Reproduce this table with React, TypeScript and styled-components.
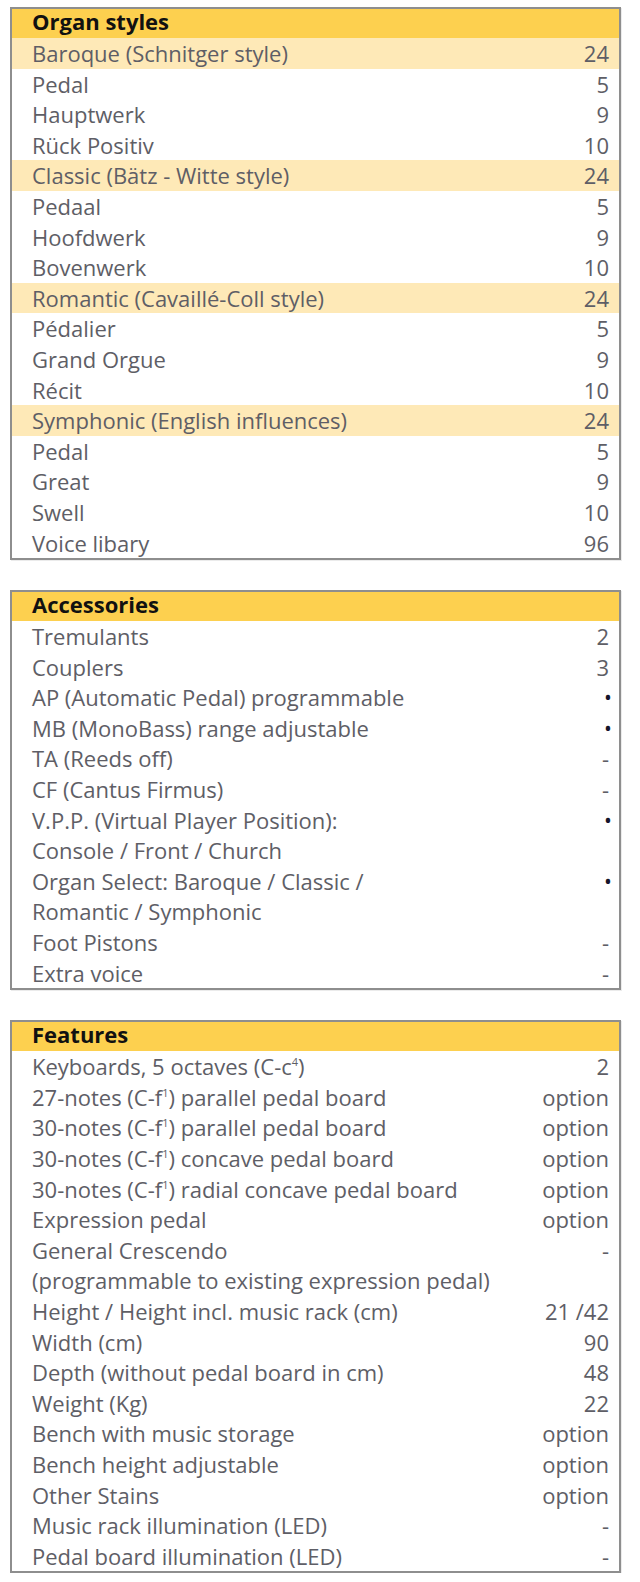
import React from "react";
import styled, { createGlobalStyle } from "styled-components";

const GlobalStyle = createGlobalStyle`
  html, body {
    margin: 0;
    padding: 0;
    background: #ffffff;
  }
  body {
    font-family: "Open Sans", "Noto Sans", sans-serif;
  }
`;

const Page = styled.main`
  width: 640px;
  box-sizing: border-box;
  padding: 7px 19px 0 10px;
  display: flex;
  flex-direction: column;
  gap: 30px;
`;

const Table = styled.section`
  border: 2px solid #8e8e8e;
  box-shadow: 1px 1px 0 rgba(0, 0, 0, 0.08);
  background: #ffffff;
`;

const Header = styled.h2`
  margin: 0;
  background: #fdd04f;
  color: #111111;
  font-size: 22px;
  font-weight: 700;
  line-height: 25px;
  padding: 0 10px 4px 20px;
`;

const Row = styled.div<{ $highlight?: boolean }>`
  display: grid;
  grid-template-columns: 1fr auto;
  align-items: start;
  padding: 0 10px 0 20px;
  background: ${(p) => (p.$highlight ? "#fee9b7" : "transparent")};
  color: #5e5e66;
  font-size: 22px;
  line-height: 30.6px;
`;

const Label = styled.div`
  white-space: pre-line;
`;

const Value = styled.div<{ $bullet?: boolean }>`
  text-align: right;
  ${(p) =>
    p.$bullet
      ? "font-size: 21px; color: #15152a; position: relative; top: 0; right: -3px;"
      : ""}
`;

const Sup = styled.sup`
  font-size: 11px;
  line-height: 0;
  vertical-align: 9px;
`;

type Item = {
  label: React.ReactNode;
  value: string;
  highlight?: boolean;
};

const dot = "•";

const organStyles: Item[] = [
  { label: "Baroque (Schnitger style)", value: "24", highlight: true },
  { label: "Pedal", value: "5" },
  { label: "Hauptwerk", value: "9" },
  { label: "Rück Positiv", value: "10" },
  { label: "Classic (Bätz - Witte style)", value: "24", highlight: true },
  { label: "Pedaal", value: "5" },
  { label: "Hoofdwerk", value: "9" },
  { label: "Bovenwerk", value: "10" },
  { label: "Romantic (Cavaillé-Coll style)", value: "24", highlight: true },
  { label: "Pédalier", value: "5" },
  { label: "Grand Orgue", value: "9" },
  { label: "Récit", value: "10" },
  { label: "Symphonic (English influences)", value: "24", highlight: true },
  { label: "Pedal", value: "5" },
  { label: "Great", value: "9" },
  { label: "Swell", value: "10" },
  { label: "Voice libary", value: "96" },
];

const accessories: Item[] = [
  { label: "Tremulants", value: "2" },
  { label: "Couplers", value: "3" },
  { label: "AP (Automatic Pedal) programmable", value: dot },
  { label: "MB (MonoBass) range adjustable", value: dot },
  { label: "TA (Reeds off)", value: "-" },
  { label: "CF (Cantus Firmus)", value: "-" },
  { label: "V.P.P. (Virtual Player Position):\nConsole / Front / Church", value: dot },
  { label: "Organ Select: Baroque / Classic /\nRomantic / Symphonic", value: dot },
  { label: "Foot Pistons", value: "-" },
  { label: "Extra voice", value: "-" },
];

const features: Item[] = [
  { label: <>Keyboards, 5 octaves (C-c<Sup>4</Sup>)</>, value: "2" },
  { label: <>27-notes (C-f<Sup>1</Sup>) parallel pedal board</>, value: "option" },
  { label: <>30-notes (C-f<Sup>1</Sup>) parallel pedal board</>, value: "option" },
  { label: <>30-notes (C-f<Sup>1</Sup>) concave pedal board</>, value: "option" },
  { label: <>30-notes (C-f<Sup>1</Sup>) radial concave pedal board</>, value: "option" },
  { label: "Expression pedal", value: "option" },
  { label: "General Crescendo\n(programmable to existing expression pedal)", value: "-" },
  { label: "Height / Height incl. music rack (cm)", value: "21 /42" },
  { label: "Width (cm)", value: "90" },
  { label: "Depth (without pedal board in cm)", value: "48" },
  { label: "Weight (Kg)", value: "22" },
  { label: "Bench with music storage", value: "option" },
  { label: "Bench height adjustable", value: "option" },
  { label: "Other Stains", value: "option" },
  { label: "Music rack illumination (LED)", value: "-" },
  { label: "Pedal board illumination (LED)", value: "-" },
];

function SpecTable({ title, items }: { title: string; items: Item[] }) {
  return (
    <Table>
      <Header>{title}</Header>
      {items.map((it, i) => (
        <Row key={i} $highlight={it.highlight}>
          <Label>{it.label}</Label>
          <Value $bullet={it.value === dot}>{it.value}</Value>
        </Row>
      ))}
    </Table>
  );
}

export default function App() {
  return (
    <>
      <GlobalStyle />
      <Page>
        <SpecTable title="Organ styles" items={organStyles} />
        <SpecTable title="Accessories" items={accessories} />
        <SpecTable title="Features" items={features} />
      </Page>
    </>
  );
}
